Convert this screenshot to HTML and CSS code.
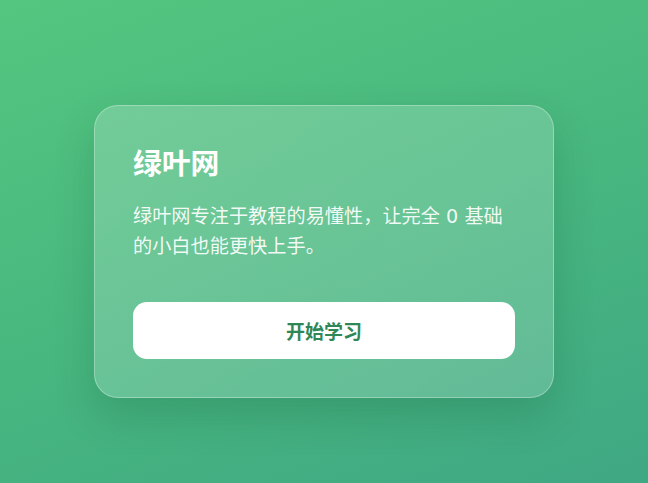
FILE: index.html
```html
<!DOCTYPE html>
<html lang="zh-CN">
<head>
    <meta charset="UTF-8">
    <meta name="viewport" content="width=device-width, initial-scale=1.0">
    <title>绿叶网</title>
    <link rel="stylesheet" href="styles.css">
</head>
<body>
    <!-- 卡片 -->
    <div class="card">
        <h1>绿叶网</h1>
        <p>绿叶网专注于教程的易懂性，让完全 0 基础的小白也能更快上手。</p>
        <button class="btn">开始学习</button>
    </div>
</body>
</html>
```

FILE: styles.css
```css
html, body {
    height: 100%;
}
body {
    margin: 0;
    padding-top: 20px;
    box-sizing: border-box;
    display: flex;
    justify-content: center;
    align-items: center;
    font-family: "DejaVu Sans", "Noto Sans CJK SC", sans-serif;
    background: linear-gradient(160deg, #54c67f 0%, #47b67f 55%, #3fa884 100%);
}
.card {
    width: 460px;
    box-sizing: border-box;
    padding: 38px;
    border-radius: 24px;
    background: linear-gradient(135deg, rgba(255, 255, 255, 0.2), rgba(255, 255, 255, 0.17));
    border: 1px solid rgba(255, 255, 255, 0.3);
    box-shadow: 0 18px 40px rgba(0, 60, 30, 0.18);
    color: #fff;
}
.card h1 {
    margin: 0;
    font-size: 28.8px;
    line-height: 40px;
    font-weight: bold;
}
.card p {
    margin: 18px 0 0;
    font-size: 19.2px;
    line-height: 30px;
    color: rgba(255, 255, 255, 0.92);
}
.btn {
    display: block;
    width: 100%;
    height: 57px;
    margin-top: 40px;
    border: none;
    border-radius: 14px;
    background-color: #fff;
    color: #2f8757;
    font-family: inherit;
    font-size: 19px;
    font-weight: bold;
    cursor: pointer;
}
```
